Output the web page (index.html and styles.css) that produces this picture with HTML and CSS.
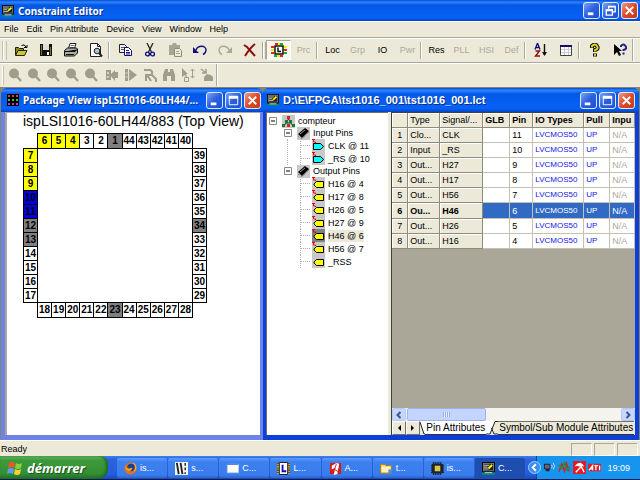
FILE: index.html
```html
<!DOCTYPE html>
<html lang="en">
<head>
<meta charset="utf-8">
<title>Constraint Editor</title>
<link rel="stylesheet" href="styles.css">
</head>
<body>
<svg class="sprite" aria-hidden="true">
  <symbol id="i-app" viewBox="0 0 14 14"><path fill="#000" d="M0 0h14v14H0z"/><path fill="#808080" d="M1 1h12v9H1z"/><path fill="#222" d="M2 2h10v7H2z"/><path stroke="#d8d8c0" d="M2 3.5h6M2 5.5h4M2 7.5h5"/><path stroke="#ff0" stroke-width="2" d="M7 7l4-4"/><path fill="#0a8080" d="M0 11h14v3H0z"/><path stroke="#ddd" d="M3 11.5h8"/></symbol>
  <symbol id="i-min" viewBox="0 0 16 16"><path fill="#fff" d="M4 10h6v3H4z"/></symbol>
  <symbol id="i-max" viewBox="0 0 16 16"><path fill="none" stroke="#fff" d="M3.5 4.500h9v8h-9z"/><path fill="#fff" d="M3 3h10v3H3z"/></symbol>
  <symbol id="i-restore" viewBox="0 0 16 16"><path fill="none" stroke="#fff" stroke-width="1.400" d="M6 6V3.500h7v6h-3M3.500 7h6.500v6H3.500zM6 4h7M3.500 8H10"/></symbol>
  <symbol id="i-close" viewBox="0 0 16 16"><path stroke="#fff" stroke-width="2" d="M4 4l8 8M12 4l-8 8"/></symbol>
  <symbol id="i-zoom" viewBox="0 0 14 14"><circle cx="6" cy="5.500" r="5" fill="#a09d8e"/><path stroke="#a09d8e" stroke-width="2.400" d="M8.500 8l4.500 5"/></symbol>
  <symbol id="i-expander" viewBox="0 0 8 8"><path fill="#fff" stroke="#8a8a80" d="M.5.5h7v7h-7z"/><path stroke="#000" d="M2 4h4"/></symbol>
  <symbol id="i-root" viewBox="0 0 13 13"><path fill="#c8c8c8" d="M0 0h13v13H0z"/><path stroke="#333" fill="none" d="M6.500 4L2 11M6.500 4L11 11M4 8h5"/><path fill="#d22" d="M5 1h3v3H5z"/><path fill="#197a2a" d="M3 5h3v3H3zM7 5h3v3H7zM0 9h3v3H0zM10 9h3v3h-3z"/><path fill="#d22" d="M5 9h3v3H5z"/></symbol>
  <symbol id="i-chip" viewBox="0 0 13 13"><path fill="#c8c8c8" d="M0 0h13v13H0z"/><path fill="#000" d="M1 7l7-6 4 3-7 7z"/><path stroke="#777" stroke-dasharray="1 1" fill="none" d="M1 9l4 3 7-7"/><path stroke="#999" d="M3 7l5-4"/></symbol>
  <symbol id="i-in" viewBox="0 0 13 13"><path fill="#c8c8c8" d="M0 0h13v13H0z"/><path fill="#0ff" stroke="#000" d="M1.500 4.500h7l3 3-3 3h-7z"/></symbol>
  <symbol id="i-out" viewBox="0 0 13 13"><path fill="#ff0" stroke="#000" d="M11.500 4.500h-7l-2.500 2.500v1l2.500 2.500h7z"/></symbol>
  <symbol id="i-mark" viewBox="0 0 13 13"><path fill="none" stroke="#e00" d="M0 .5h3M1.500 1v2h2v1"/></symbol>
</svg>

<header class="titlebar main-title">
  <svg class="title-icon"><use href="#i-app"/></svg>
  <h1 class="title-text">Constraint Editor</h1>
  <div class="caption-buttons">
    <button class="cap" aria-label="Minimize"><svg><use href="#i-min"/></svg></button>
    <button class="cap" aria-label="Restore"><svg><use href="#i-restore"/></svg></button>
    <button class="cap cap-close" aria-label="Close"><svg><use href="#i-close"/></svg></button>
  </div>
</header>

<nav class="menubar">
  <button>File</button><button>Edit</button><button>Pin Attribute</button><button>Device</button><button>View</button><button>Window</button><button>Help</button>
</nav>

<div class="toolbar">
  <span class="grip"></span>
  <button aria-label="Open"><svg viewBox="0 0 14 14"><path fill="#8a8a20" stroke="#222200" d="M1.500 12V4.500h3l1 1h4V8"/><path fill="#c8c83c" stroke="#222200" d="M1.500 12.500L4 7.500h9l-2.500 5z"/><path fill="none" stroke="#000" d="M7.500 2.500q3-2 4.500 1.500M13 2v2.500h-3"/></svg></button>
  <button aria-label="Save"><svg viewBox="0 0 14 14"><path fill="#111" d="M1 1h12v12H1z"/><path fill="#7a7a10" d="M2 2h1v10H2zM11 4h1v8h-1z"/><path fill="#ddd" d="M4 1h6v6H4z"/><path fill="#fff" d="M8 9h2v3H8z"/></svg></button>
  <button aria-label="Print"><svg viewBox="0 0 14 14"><path fill="#fff" stroke="#222" d="M4.500 5.500l1.500-5h6l-1.500 5z"/><path stroke="#777" d="M6.500 2.500h4M6 4.500h4"/><path fill="#aaa" stroke="#111" d="M.5 7.500l3-2.500h9l1 1v4l-3 3h-10z"/><path stroke="#111" d="M1 8.500h10l2-2M2 11.500h8"/><path stroke="#cc0" d="M7 10.500h2"/></svg></button>
  <button aria-label="Print preview"><svg viewBox="0 0 14 14"><path fill="#fff" stroke="#222" d="M1.500.5h7l3 3v10h-10z"/><path fill="none" stroke="#222" d="M8.500.5v3h3"/><circle cx="8" cy="8" r="2.800" fill="#a8c8c8" stroke="#222"/><path stroke="#222" stroke-width="2" d="M10 10l3 3.500"/></svg></button>
  <span class="sep"></span>
  <button aria-label="Copy"><svg viewBox="0 0 14 14"><path fill="#eee" stroke="#222" d="M1.500 1.500h5l2 2v6h-7z"/><path stroke="#555" d="M3 4.500h4M3 6.500h4"/><path fill="#fff" stroke="#10107c" d="M6.500 4.500h4l3 3v5h-7z"/><path stroke="#10107c" d="M8 7.500h3M8 9.500h4M8 11h4"/></svg></button>
  <button aria-label="Cut"><svg viewBox="0 0 14 14"><path fill="none" stroke="#222" stroke-width="1.300" d="M4 0l4.500 9M10 0L5.500 9"/><g fill="none" stroke="#10107c" stroke-width="1.400"><circle cx="4.500" cy="11" r="1.900"/><circle cx="9.500" cy="11" r="1.900"/></g></svg></button>
  <button aria-label="Paste" disabled><svg viewBox="0 0 14 14"><path fill="#a8a595" d="M1 2h3l1-2h3l1 2h3v10H1z"/><path fill="#ece9d8" stroke="#8f8c7c" d="M6.500 5.500h5l2 2v6h-7z"/><path stroke="#a8a595" d="M8 8.500h3M8 10.500h4"/></svg></button>
  <button aria-label="Undo"><svg viewBox="0 0 14 14"><path fill="none" stroke="#10107c" stroke-width="1.400" d="M3 7c2-5 10-5 10 0q0 3-3 4.500"/><path fill="#10107c" d="M0 4v6h6z"/></svg></button>
  <button aria-label="Redo" disabled><svg viewBox="0 0 14 14"><path fill="none" stroke="#aaa798" stroke-width="1.400" d="M11 7c-2-5-10-5-10 0q0 3 3 4.500"/><path fill="#aaa798" d="M14 4v6H8z"/></svg></button>
  <button aria-label="Delete"><svg viewBox="0 0 14 14"><path fill="none" stroke="#8c1010" stroke-width="2" d="M1 2l3 2 8 9M12 1Q7 5 2 13"/></svg></button>
  <span class="sep double"></span>
  <button class="pressed" aria-label="Locations"><svg class="wide" viewBox="0 0 16 14"><path fill="#e22" d="M4 0h3v2H4zM0 3h3v2H0zM13 6h3v2h-3zM0 9h3v2H0zM9 12h3v2H9z"/><path fill="#ee0" d="M7 0h2v2H7zM0 6h3v2H0zM13 3h3v2h-3zM6 12h3v2H6z"/><path fill="#0b2" d="M9 0h3v2H9zM13 9h3v2h-3zM3 12h3v2H3z"/><path fill="#fff" stroke="#111" stroke-width="1.500" d="M4 3h8v8H4z"/><path stroke="#111" stroke-width="1.500" fill="none" d="M7 4.500v4h3"/></svg></button>
  <button disabled>Prc</button>
  <span class="sep"></span>
  <button>Loc</button><button disabled>Grp</button><button>IO</button><button disabled>Pwr</button>
  <span class="sep"></span>
  <button>Res</button><button disabled>PLL</button><button disabled>HSI</button><button disabled>Def</button>
  <span class="sep"></span>
  <button aria-label="Sort ascending"><svg viewBox="0 0 14 14"><path fill="none" stroke="#10107c" stroke-width="1.300" d="M1 6.500L3.500 0 6 6.500M2 4.500h3"/><path fill="none" stroke="#8c1010" stroke-width="1.400" d="M1.500 8h4l-4 5H6"/><path stroke="#111" stroke-width="1.400" d="M10.500 1v11"/><path fill="#111" d="M8 9h5l-2.500 4z"/></svg></button>
  <button aria-label="Table"><svg viewBox="0 0 14 14"><path fill="#fff" stroke="#444" d="M1.500 2.500h11v10h-11z"/><path fill="#10106c" d="M1 2h12v2H1z"/><path stroke="#ccc" d="M5.500 4v8M9.500 4v8M2 6.500h10M2 9.500h10"/></svg></button>
  <span class="sep"></span>
  <button aria-label="About"><svg viewBox="0 0 14 14"><path fill="none" stroke="#111" stroke-width="4" d="M4 5V3q3-3 5 0t-2 4v2M7 10.500v3"/><path fill="none" stroke="#e8e020" stroke-width="1.800" d="M4 4.500V3q3-3 5 0t-2 4v1.500M7 11v2"/></svg></button>
  <button aria-label="Context help"><svg viewBox="0 0 14 14"><path fill="#000" d="M1 1v11l3-3 2 4 2-1-2-4h3z"/><path fill="none" stroke="#20208c" stroke-width="2" d="M8 4V3q2.500-3 4.500 0t-2 4v1M10.500 9.500v2"/></svg></button>
  <span class="sep end"></span>
</div>

<div class="toolbar toolbar-view">
  <span class="grip single"></span>
  <button disabled aria-label="Zoom in"><svg><use href="#i-zoom"/></svg></button>
  <button disabled aria-label="Zoom out"><svg><use href="#i-zoom"/></svg></button>
  <button disabled aria-label="Zoom area"><svg><use href="#i-zoom"/></svg></button>
  <button disabled aria-label="Zoom fit"><svg><use href="#i-zoom"/></svg></button>
  <button disabled aria-label="Zoom selection"><svg><use href="#i-zoom"/></svg></button>
  <span class="space"></span>
  <button disabled aria-label="Fan in"><svg viewBox="0 0 14 14"><path fill="#a09d8e" d="M1 2h5v10H1zM13 4v6h-3v3L5 7l5-5v2z"/><path fill="#d0cdbc" d="M2 4h2v2H2zM2 8h2v2H2z"/></svg></button>
  <button disabled aria-label="Fan out"><svg viewBox="0 0 14 14"><path fill="#a09d8e" d="M1 1h3v12H1zM5 1l8 6-8 6z"/><path stroke="#d0cdbc" d="M1 5h5M1 9h5"/></svg></button>
  <button disabled aria-label="Route"><svg viewBox="0 0 14 14"><path fill="none" stroke="#a09d8e" stroke-width="2" d="M1 2h6q4 2 1 5H2M3 7v6M4 7l4 6M8 6l5 5v3"/></svg></button>
  <button disabled aria-label="Find"><svg viewBox="0 0 14 14"><path fill="#a09d8e" d="M3 1h3v3h2V1h3l2 6v6H9V8H5v5H1V7z"/></svg></button>
  <button disabled aria-label="Move"><svg viewBox="0 0 14 14"><path fill="#a09d8e" d="M1 0v9l3-2 1 3 1-1-1-3h2z"/><path fill="none" stroke="#a09d8e" d="M3.500 9.500h4v4h-4zM11.500 1v9M9.500 3l2-2 2 2M9.500 8l2 2 2-2"/></svg></button>
  <button disabled aria-label="Pan"><svg viewBox="0 0 14 14"><path fill="none" stroke="#a09d8e" stroke-width="1.500" d="M1 1l5 4M6 1v4H2"/><path fill="#a09d8e" d="M4 13V9l3-3 4 1 2 2v4z"/></svg></button>
  <span class="sep end"></span>
</div>

<main class="workspace">
  <section class="window package">
    <header class="titlebar">
      <svg class="title-icon" viewBox="0 0 12 12"><path d="M0 0h12v12H0z"/><path stroke="#e33" stroke-width="2" stroke-dasharray="2 2" d="M1 2h10"/><path stroke="#3c3" stroke-width="2" stroke-dasharray="2 2" d="M1 6h10"/><path stroke="#c3c" stroke-width="2" stroke-dasharray="2 2" d="M1 10h10"/></svg>
      <h2 class="title-text">Package View ispLSI1016-60LH44/...</h2>
      <div class="caption-buttons">
        <button class="cap" aria-label="Minimize"><svg><use href="#i-min"/></svg></button>
        <button class="cap" aria-label="Maximize"><svg><use href="#i-max"/></svg></button>
        <button class="cap cap-close" aria-label="Close"><svg><use href="#i-close"/></svg></button>
      </div>
    </header>
    <div class="package-body">
      <h3 class="device-name">ispLSI1016-60LH44/883 (Top View)</h3>
      <div class="chip">
        <ol class="pins top"><li class="used">6</li><li class="used">5</li><li class="used">4</li><li>3</li><li>2</li><li class="fixed">1</li><li>44</li><li>43</li><li>42</li><li>41</li><li>40</li></ol>
        <ol class="pins left"><li class="used">7</li><li class="used">8</li><li class="used">9</li><li class="input">10</li><li class="input">11</li><li class="fixed">12</li><li class="fixed">13</li><li>14</li><li>15</li><li>16</li><li>17</li></ol>
        <div class="die"></div>
        <ol class="pins right"><li>39</li><li>38</li><li>37</li><li>36</li><li>35</li><li class="fixed">34</li><li>33</li><li>32</li><li>31</li><li>30</li><li>29</li></ol>
        <ol class="pins bottom"><li>18</li><li>19</li><li>20</li><li>21</li><li>22</li><li class="fixed">23</li><li>24</li><li>25</li><li>26</li><li>27</li><li>28</li></ol>
      </div>
    </div>
  </section>

  <section class="window document">
    <header class="titlebar">
      <svg class="title-icon"><use href="#i-app"/></svg>
      <h2 class="title-text doc-title">D:\E\FPGA\tst1016_001\tst1016_001.lct</h2>
      <div class="caption-buttons">
        <button class="cap" aria-label="Minimize"><svg><use href="#i-min"/></svg></button>
        <button class="cap" aria-label="Maximize"><svg><use href="#i-max"/></svg></button>
        <button class="cap cap-close" aria-label="Close"><svg><use href="#i-close"/></svg></button>
      </div>
    </header>
    <div class="document-body">
      <div class="tree">
        <div class="node root"><svg class="exp"><use href="#i-expander"/></svg><svg class="ico"><use href="#i-root"/></svg><span>compteur</span></div>
        <ul class="branch">
          <li>
            <div class="node"><svg class="exp"><use href="#i-expander"/></svg><svg class="ico"><use href="#i-chip"/></svg><span>Input Pins</span></div>
            <ul class="leaves linked">
              <li class="leaf"><svg class="ico"><use href="#i-in"/><use href="#i-mark"/></svg><span>CLK @ 11</span></li>
              <li class="leaf"><svg class="ico"><use href="#i-in"/><use href="#i-mark"/></svg><span>_RS @ 10</span></li>
            </ul>
          </li>
          <li>
            <div class="node"><svg class="exp"><use href="#i-expander"/></svg><svg class="ico"><use href="#i-chip"/></svg><span>Output Pins</span></div>
            <ul class="leaves">
              <li class="leaf"><svg class="ico"><use href="#i-out"/><use href="#i-mark"/></svg><span>H16 @ 4</span></li>
              <li class="leaf"><svg class="ico"><use href="#i-out"/><use href="#i-mark"/></svg><span>H17 @ 8</span></li>
              <li class="leaf"><svg class="ico"><use href="#i-out"/><use href="#i-mark"/></svg><span>H26 @ 5</span></li>
              <li class="leaf"><svg class="ico"><use href="#i-out"/><use href="#i-mark"/></svg><span>H27 @ 9</span></li>
              <li class="leaf selected"><svg class="ico"><use href="#i-out"/><use href="#i-mark"/></svg><span>H46 @ 6</span></li>
              <li class="leaf"><svg class="ico"><use href="#i-out"/><use href="#i-mark"/></svg><span>H56 @ 7</span></li>
              <li class="leaf"><svg class="ico"><use href="#i-out"/></svg><span>_RSS</span></li>
            </ul>
          </li>
        </ul>
      </div>
      <div class="sheet">
        <div class="grid-area">
          <table>
            <colgroup><col class="c-num"><col class="c-type"><col class="c-signal"><col class="c-glb"><col class="c-pin"><col class="c-io"><col class="c-pull"><col class="c-input"></colgroup>
            <thead><tr><th></th><th class="plain">Type</th><th class="plain">Signal/...</th><th>GLB</th><th>Pin</th><th>IO Types</th><th>Pull</th><th>Inpu</th></tr></thead>
            <tbody>
              <tr><th>1</th><th>Clo...</th><th>CLK</th><td></td><td>11</td><td class="set">LVCMOS50</td><td class="set">UP</td><td class="na">N/A</td></tr>
              <tr><th>2</th><th>Input</th><th>_RS</th><td></td><td>10</td><td class="set">LVCMOS50</td><td class="set">UP</td><td class="na">N/A</td></tr>
              <tr><th>3</th><th>Out...</th><th>H27</th><td></td><td>9</td><td class="set">LVCMOS50</td><td class="set">UP</td><td class="na">N/A</td></tr>
              <tr><th>4</th><th>Out...</th><th>H17</th><td></td><td>8</td><td class="set">LVCMOS50</td><td class="set">UP</td><td class="na">N/A</td></tr>
              <tr><th>5</th><th>Out...</th><th>H56</th><td></td><td>7</td><td class="set">LVCMOS50</td><td class="set">UP</td><td class="na">N/A</td></tr>
              <tr class="current"><th>6</th><th>Ou...</th><th>H46</th><td></td><td>6</td><td class="set">LVCMOS50</td><td class="set">UP</td><td class="na">N/A</td></tr>
              <tr><th>7</th><th>Out...</th><th>H26</th><td></td><td>5</td><td class="set">LVCMOS50</td><td class="set">UP</td><td class="na">N/A</td></tr>
              <tr><th>8</th><th>Out...</th><th>H16</th><td></td><td>4</td><td class="set">LVCMOS50</td><td class="set">UP</td><td class="na">N/A</td></tr>
            </tbody>
          </table>
        </div>
        <div class="scrollbar">
          <button aria-label="Scroll left"><svg viewBox="0 0 8 8"><path d="M5.500 1l-3 3 3 3"/></svg></button>
          <div class="track"><div class="thumb"><i></i></div></div>
          <button aria-label="Scroll right"><svg viewBox="0 0 8 8"><path d="M2.500 1l3 3-3 3"/></svg></button>
        </div>
        <div class="sheet-tabs">
          <button class="arrow" aria-label="Previous tab"><svg viewBox="0 0 8 8"><path d="M6 1v6L3 4z"/></svg></button>
          <button class="arrow" aria-label="Next tab"><svg viewBox="0 0 8 8"><path d="M2 1v6l3-3z"/></svg></button>
          <svg class="slant" viewBox="0 0 5 14"><path class="face" d="M0 0h5v13H4z"/><path d="M0 1l4 12h1"/></svg>
          <button class="tab active">Pin Attributes</button>
          <svg class="slant join" viewBox="0 0 12 14"><path class="face" d="M0 0h9L4 13H0z"/><path d="M12 .500H9L4 13H0M5.500 7L8 13h4"/></svg>
          <button class="tab">Symbol/Sub Module Attributes</button>
        </div>
      </div>
    </div>
  </section>
</main>

<footer class="statusbar"><span class="status-text">Ready</span><span class="cell"></span><span class="cell"></span><span class="cell"></span></footer>

<div class="taskbar">
  <button class="start"><svg viewBox="0 0 16 16"><path fill="#f0562c" d="M2 3q3-2 6 0L7 8q-3-2-6 0z"/><path fill="#8ccf3c" d="M9 3q3 2 6 0l-1 5q-3 2-6 0z"/><path fill="#5f9cf5" d="M1 9q3-2 6 0l-1 5q-3-2-6 0z"/><path fill="#fbd02e" d="M8 9q3 2 6 0l-1 5q-3 2-6 0z"/></svg>démarrer</button>
  <div class="tasks">
    <button><svg viewBox="0 0 14 14"><circle cx="7" cy="7" r="6.500" fill="#e8701a"/><circle cx="7.500" cy="6" r="4" fill="#1c3f8c"/><path fill="#f7a428" d="M1 3q1 4 5 4l3-1q0 3-3 4-4 0-5-7z"/><path fill="none" stroke="#ffc53a" d="M10 1q5 4 1 9"/></svg>is...</button>
    <button><svg viewBox="0 0 14 14"><path fill="#f4f4f4" d="M0 0h14v14H0z"/><path stroke="#222" stroke-width="2" d="M2 1l2 12M6 1l2 12"/><path stroke="#222" stroke-width="1.500" stroke-dasharray="3 2" d="M11 1v12"/></svg>s...</button>
    <button><svg viewBox="0 0 14 14"><path fill="#fff" stroke="#b8d0f0" d="M1.500 2.500h12v9h-12z"/><path stroke="#3e6cd0" d="M1 2.500h12"/></svg>C...</button>
    <button><svg viewBox="0 0 14 14"><path fill="#e8d83c" d="M0 1h14v12H0z"/><path stroke="#222" stroke-width="2" stroke-dasharray="1 1" d="M1 1v12M13 1v12"/><path fill="#fff" stroke="#111" d="M2.500.5h9v13h-9z"/><path fill="none" stroke="#1010c0" stroke-width="2" d="M6 3v7h4"/></svg>L...</button>
    <button><svg viewBox="0 0 14 14"><path fill="#d21d1d" d="M1 1h12v12H1z"/><path fill="#fff" d="M3 4l5-3 3 1-2 11-4 1 2-8-4 2z"/><path stroke="#d21d1d" fill="none" d="M8 2L6 8l5 3"/></svg>A...</button>
    <button><svg viewBox="0 0 14 14"><path fill="#f6d36a" stroke="#a57a1c" d="M.5 2.500h5l1 1.500h6v8H.5z"/><path fill="#fff3b8" d="M2 5h9v6H2z"/><path fill="#4a8ee0" d="M9 8h4v4H9z"/></svg>t...</button>
    <button><svg viewBox="0 0 14 14"><path stroke="#111" stroke-width="14" stroke-dasharray="1 1" d="M2 7h10"/><path stroke="#111" stroke-dasharray="1 1" d="M.5 3v9M13.500 3v9"/><path fill="#222" d="M1 2h12v10H1z"/><path fill="#d2c65a" d="M4 4h6v6H4z"/></svg>is...</button>
    <button class="active"><svg><use href="#i-app"/></svg>C...</button>
  </div>
  <div class="tray">
    <button class="chevron" aria-label="Show hidden icons"><svg viewBox="0 0 14 14"><circle cx="7" cy="7" r="6.500" fill="#3d8ef0" stroke="#a8d4ff"/><path fill="none" stroke="#fff" stroke-width="2" d="M8.500 3.500L5 7l3.500 3.500"/></svg></button>
    <svg viewBox="0 0 14 14"><path fill="#1b2740" d="M1 3h7v6H1zM3 9h4v2H3z"/><path fill="#667" d="M2 4h5v4H2z"/><path fill="none" stroke="#cfe4ff" d="M9 4q2 2 0 4M11 2q3 4 0 7"/></svg>
    <svg viewBox="0 0 14 14"><path fill="none" stroke="#c22" stroke-width="1.500" d="M1 12L4 3l3 8 2-9 3 9"/><path fill="none" stroke="#2a8a3a" stroke-width="1.500" d="M1 4l3 4 3-6 3 8 3-4"/></svg>
    <svg viewBox="0 0 14 14"><path fill="#e31b23" d="M0 0h14v14H0z"/><path fill="#fff" d="M2 6q2-4 6-4 3 1 4 4-3-1-5 0Q4 5 2 6z"/><path stroke="#fff" stroke-width="1.500" fill="none" d="M8 4l4 8M9 6l-6 6"/></svg>
    <svg viewBox="0 0 14 14"><path fill="#d81f26" d="M0 3h14v8H0z"/><path fill="none" stroke="#fff" stroke-width="1.400" d="M1 10l4-5v5M7 5h4M8.500 5v5M12.500 5v5M3 8.500h2"/></svg>
    <time>19:09</time>
  </div>
</div>
</body>
</html>
```
FILE: styles.css
```css
* { box-sizing: border-box; }
body {
  margin: 0;
  min-height: 100vh;
  display: flex;
  flex-direction: column;
  overflow-x: hidden;
  background: #ece9d8;
  color: #000;
  font: 9px/12px "Liberation Sans", Arial, sans-serif;
}
button {
  margin: 0;
  padding: 0;
  border: 0;
  background: none;
  color: inherit;
  font: inherit;
}
h1, h2, h3, ol, ul { margin: 0; padding: 0; list-style: none; font-weight: normal; }
svg { display: block; flex: none; }
.sprite { position: absolute; width: 0; height: 0; }

/* Title bars */
.titlebar {
  display: flex;
  align-items: center;
  gap: 4px;
  height: 24px;
  padding: 0 2px 0 4px;
  color: #fff;
  background: linear-gradient(#0a49d0, #2b86ff 10%, #0558e6 24%, #0660f4 75%, #0561f6 86%, #0443c4);
}
.main-title { height: 21px; padding: 0 2px; }
.title-icon { width: 12px; height: 12px; }
.title-text {
  flex: 1;
  overflow: hidden;
  white-space: nowrap;
  font: bold 10px/14px "Noto Sans", sans-serif;
  text-shadow: 1px 1px #0a2f8c;
}
.caption-buttons { display: flex; gap: 2px; }
.cap {
  width: 17px;
  height: 17px;
  border: 1px solid #dfe9fb;
  border-radius: 3px;
  background: linear-gradient(135deg, #7ba4f3, #2c5fe0 50%, #1d4fd0);
}
.cap svg { width: 15px; height: 15px; }
.cap-close { background: linear-gradient(135deg, #f09a7c, #e0492a 50%, #c63a18); }

/* Menus and toolbars */
.menubar {
  display: flex;
  gap: 8px;
  height: 16px;
  padding: 0 4px 2px;
  border-top: 1px solid #fff;
}
.toolbar {
  display: flex;
  align-items: center;
  height: 25px;
  border-top: 1px solid #aca899;
  box-shadow: inset 0 1px #fff;
}
.toolbar button {
  display: flex;
  align-items: center;
  justify-content: center;
  width: 25px;
  height: 20px;
}
.toolbar button:disabled { color: #aca899; }
.toolbar svg { width: 14px; height: 14px; }
.toolbar svg.wide { width: 16px; }
.toolbar .pressed {
  border: 1px solid;
  border-color: #aca899 #fff #fff #aca899;
  background: #f8f7f0;
}
.grip { width: 5px; height: 19px; margin: 0 1px 0 2px; border: solid #c4c1b0; border-width: 0 1px; box-shadow: inset 1px 0 #fff; }
.grip.single { width: 2px; border-left: 0; }
.sep { width: 4px; height: 17px; border-left: 1px solid #aca899; box-shadow: inset 1px 0 #fff; }
.sep.double { border-right: 1px solid #aca899; }
.sep.end { height: 22px; }
.space { width: 2px; }
.toolbar-view button { width: 19px; }
.toolbar-view svg { width: 14px; height: 14px; }

/* Child windows */
.workspace {
  flex: 1;
  display: grid;
  grid-template-columns: 262fr 376fr;
  padding: 1px 1px 0;
  background: #858378;
}
.window {
  display: flex;
  flex-direction: column;
  min-width: 0;
  border-radius: 6px 6px 0 0;
  overflow: hidden;
  background: #0b3fd8;
}
.package { padding: 0 3px 5px 4px; background: #6d84e6; }
.package .titlebar { margin: 0 -3px 0 -4px; padding-left: 6px; }
.document { padding: 0 4px 5px 3px; }
.document .titlebar { margin: 0 -4px 0 -3px; padding: 0 4px; }
.doc-title { font-family: "Liberation Sans", Arial, sans-serif; font-size: 11px; }
.package-body {
  flex: 1;
  padding: 0 0 12px 16px;
  border: solid #aca899;
  border-width: 1px 0 0 2px;
  background: #fff;
}
.device-name { font-size: 14px; line-height: 16px; white-space: nowrap; }
.chip {
  display: grid;
  grid-template-columns: 14px 156px 14px;
  width: max-content;
  margin-top: 4px;
}
.pins { display: flex; font-weight: bold; font-size: 10px; line-height: 13px; text-align: center; }
.pins li { flex: 1; border: 1px solid #000; }
.top, .bottom { grid-column: 2; height: 15px; }
.top li + li, .bottom li + li { border-left: 0; }
.top li { border-bottom: 0; }
.bottom li { border-top: 0; }
.left, .right { flex-direction: column; height: 155px; }
.left { grid-column: 1; }
.left li, .right li { border-bottom: 0; }
.left li:last-child, .right li:last-child { border-bottom: 1px solid #000; }
.left li { border-right: 0; }
.right li { border-left: 0; }
.die { border: 1px solid #000; }
.used { background: #ff0; }
.input { background: #0000e0; }
.fixed { background: #808080; }

.document-body {
  flex: 1;
  display: grid;
  grid-template-columns: 122fr 246fr;
  background: #ece9d8;
}

/* Pin tree */
.tree { padding: 2px 0 0 2px; border: solid #716f64; border-width: 1px 0 0 1px; background: #fff; }
.node { display: flex; align-items: center; height: 12px; }
.exp { width: 8px; height: 8px; margin-right: 5px; }
.ico { width: 13px; height: 13px; margin-right: 3px; }
.branch { padding-left: 15px; }
.leaves { margin-left: 3px; border-left: 1px dotted transparent; }
.linked { border-left-color: #b0b0a8; }
.leaf { display: flex; align-items: center; height: 13px; margin-left: 12px; border-left: 1px dotted #b0b0a8; }
.leaf::before { content: ""; width: 9px; margin-right: 2px; border-top: 1px dotted #b0b0a8; }
.leaf .ico { background: #c8c8c8; }
.leaf.selected .ico { background: #808080; }
.selected span { background: #ece9d8; }

/* Attribute sheet */
.sheet {
  display: flex;
  flex-direction: column;
  min-width: 0;
  margin-left: 3px;
  border: solid #404040;
  border-width: 1px 0 0 1px;
}
.grid-area { flex: 1; overflow: hidden; background: #aaa798; }
table { width: 100%; border-collapse: separate; border-spacing: 0; table-layout: fixed; }
.c-num { width: 16px; }
.c-type { width: 32px; }
.c-signal { width: 43px; }
.c-glb { width: 27px; }
.c-pin { width: 23px; }
.c-io { width: 51px; }
.c-pull { width: 26px; }
th, td {
  height: 15px;
  padding: 0 2px;
  overflow: hidden;
  white-space: nowrap;
  text-align: left;
  line-height: 12px;
  border: solid #c4c1b0;
  border-width: 0 1px 1px 0;
}
th { background: #ece9d8; border-color: #8f8c7c; box-shadow: inset 1px 1px #fff; }
tbody th { font-weight: normal; }
.plain { font-weight: normal; }
td { background: #fff; }
tbody th:first-child { text-align: center; }
.set { color: #1414e6; font-size: 8px; }
.na { color: #aca899; }
.current th { height: 16px; font-weight: bold; }
.current td { background: #316ac5; color: #fff; }
.scrollbar { display: flex; height: 13px; background: #f4f3ee; }
.scrollbar button { display: grid; place-items: center; width: 14px; border: 1px solid #b4c8f6; border-radius: 2px; background: #c8d6fb; }
.scrollbar button svg { width: 8px; height: 8px; fill: none; stroke: #3c5490; stroke-width: 2; }
.track { flex: 1; padding: 0 1px; }
.thumb { display: grid; place-items: center; width: 37%; height: 13px; border: 1px solid #9ab4f0; border-radius: 2px; background: #c4d4fc; }
.thumb i { width: 7px; height: 5px; background: repeating-linear-gradient(90deg, #93aee8 0 1px, #e8effe 1px 2px); }
.sheet-tabs { display: flex; height: 14px; overflow: hidden; background: #ece9d8; font-size: 10px; line-height: 12px; }
.sheet-tabs .arrow { display: grid; place-items: center; flex: none; width: 14px; border: 1px solid; border-color: #fff #716f64 #716f64 #fff; }
.arrow svg { width: 8px; height: 8px; }
.tab { flex: none; padding: 0 1px; border-top: 1px solid #716f64; border-bottom: 1px solid #333; }
.tab.active { padding: 0 1px; border-top-color: #fff; background: #fff; }
.slant { width: 5px; height: 14px; fill: none; stroke: #222; }
.slant.join { width: 12px; }
.face { fill: #fff; stroke: none; }

/* Status bar and task bar */
.statusbar { display: flex; gap: 2px; height: 16px; padding: 2px 2px 0 1px; border-top: 1px solid #fff; }
.status-text { flex: 1; }
.cell { width: 21px; border: 1px solid; border-color: #aca899 #fff #fff #aca899; }
.taskbar {
  display: flex;
  height: 24px;
  border-bottom: 1px solid #0a1c50;
  color: #fff;
  background: linear-gradient(#3f80ee, #2a63dc 15%, #245edb 80%, #1a49b4);
}
.start {
  display: flex;
  align-items: center;
  gap: 4px;
  width: 108px;
  padding-left: 7px;
  border-radius: 0 8px 10px 0;
  background: linear-gradient(#6fbf6a, #3c9a3c 18%, #349034 75%, #256e28);
  box-shadow: inset -2px 0 3px #1f6424;
  font: italic bold 13px/20px "Noto Sans", sans-serif;
  text-shadow: 1px 1px 1px #14501a;
}
.start svg { width: 16px; height: 16px; }
.tasks { display: flex; flex: 1; gap: 1px; margin-left: 9px; max-width: 408px; }
.tasks button {
  display: flex;
  flex: 1;
  align-items: center;
  gap: 3px;
  padding-left: 7px;
  margin: 2px 0 1px;
  border-radius: 2px;
  background: linear-gradient(#5c9bff, #3c80f0 20%, #3a7cec 85%, #2c65d0);
}
.tasks svg { width: 13px; height: 13px; }
.tasks .active { background: #1e4eb0; }
.tray {
  display: flex;
  align-items: center;
  gap: 2px;
  margin-left: auto;
  padding-right: 10px;
  background: linear-gradient(90deg, transparent 8px, #0c3fa8 8px 9px, #1694ee 9px);
}
.tray svg { width: 13px; height: 13px; }
.tray time { margin-left: 4px; }
```
